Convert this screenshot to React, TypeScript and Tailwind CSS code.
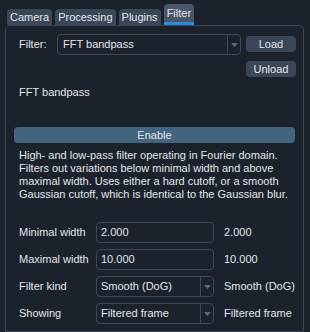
import React from "react";

function Arrow() {
  return (
    <div className="w-[13px] self-stretch border-l border-[#3c4859] flex items-center justify-center">
      <svg width="7" height="4" viewBox="0 0 7 4">
        <path d="M0 0 L7 0 L3.5 4 Z" fill="#5d6978" />
      </svg>
    </div>
  );
}

function Field({ value, combo }: { value: string; combo?: boolean }) {
  return (
    <div className="w-[118px] h-[21px] border border-[#3c4859] rounded-[4px] flex items-center">
      <div className="flex-1 pl-[4px] truncate">{value}</div>
      {combo && <Arrow />}
    </div>
  );
}

const rows = [
  { label: "Minimal width", value: "2.000", combo: false, out: "2.000" },
  { label: "Maximal width", value: "10.000", combo: false, out: "10.000" },
  { label: "Filter kind", value: "Smooth (DoG)", combo: true, out: "Smooth (DoG)" },
  { label: "Showing", value: "Filtered frame", combo: true, out: "Filtered frame" },
];

export default function App() {
  return (
    <div className="w-[310px] h-[332px] bg-[#1b222c] overflow-hidden text-[11px] text-[#e2e6eb] font-['Liberation_Sans',Arial,sans-serif] leading-none flex flex-col">
      {/* tab bar */}
      <div className="flex items-end gap-[3px] pl-[7px] pt-[4px] h-[25px]">
        {["Camera", "Processing", "Plugins"].map((t) => (
          <div key={t} className="h-[16px] px-[3px] bg-[#3b4657] rounded-t-[4px] flex items-center">
            {t}
          </div>
        ))}
        <div className="h-[21px] px-[3px] bg-[#4a5669] rounded-t-[4px] flex flex-col">
          <div className="flex-1 flex items-center">Filter</div>
          <div className="h-[3px] -mx-[3px] bg-[#2a8ee0]" />
        </div>
      </div>

      {/* panel */}
      <div className="flex-1 ml-[5px] mr-[6px] border border-[#3a4555] rounded-t-[5px] flex flex-col">
        <div className="flex pl-[13px] pr-[7px] pt-[8px]">
          <div className="flex items-center h-[21px] w-[38px]">Filter:</div>
          <div className="w-[184px] h-[21px] border border-[#3c4859] rounded-[4px] flex items-center">
            <div className="flex-1 pl-[5px]">FFT bandpass</div>
            <Arrow />
          </div>
          <div className="ml-auto flex flex-col gap-[9px] pt-[2px]">
            <div className="w-[50px] h-[16px] bg-[#3b4657] rounded-[4px] flex items-center justify-center">Load</div>
            <div className="w-[50px] h-[16px] bg-[#3b4657] rounded-[4px] flex items-center justify-center">Unload</div>
          </div>
        </div>

        <div className="pl-[13px] mt-[10px]">FFT bandpass</div>

        <div className="mx-[8px] mt-[29px] h-[16px] bg-[#44637f] rounded-[4px] flex items-center justify-center">
          Enable
        </div>

        <div className="pl-[13px] pr-[4px] mt-[6px] leading-[13px] whitespace-nowrap">
          High- and low-pass filter operating in Fourier domain.
          <br />
          Filters out variations below minimal width and above
          <br />
          maximal width. Uses either a hard cutoff, or a smooth
          <br />
          Gaussian cutoff, which is identical to the Gaussian blur.
        </div>

        <div className="flex flex-col gap-[6px] mt-[21px] pl-[13px]">
          {rows.map((r) => (
            <div key={r.label} className="flex items-center">
              <div className="w-[77px]">{r.label}</div>
              <Field value={r.value} combo={r.combo} />
              <div className="ml-[10px]">{r.out}</div>
            </div>
          ))}
        </div>
      </div>
    </div>
  );
}
